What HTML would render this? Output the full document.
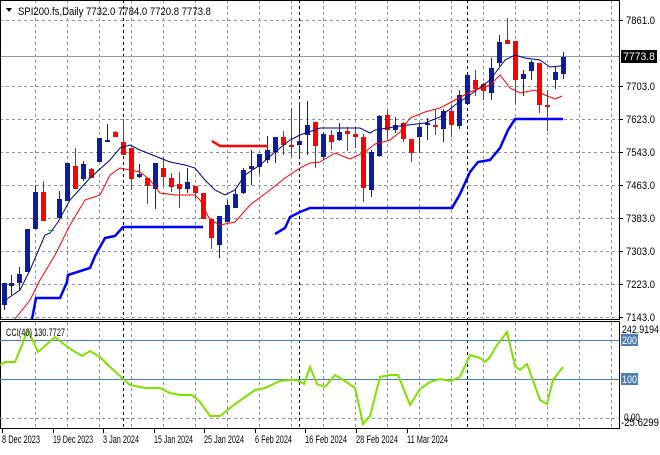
<!DOCTYPE html><html><head><style>
body{margin:0;background:#fff;width:660px;height:450px;overflow:hidden;font-family:"Liberation Sans",sans-serif}
svg text{font-family:"Liberation Sans",sans-serif;font-size:11px}
</style></head><body>
<svg id="s" width="660" height="450" xmlns="http://www.w3.org/2000/svg" shape-rendering="crispEdges"></svg>
<script>
var s=document.getElementById('s'),h='';
function L(x1,y1,x2,y2,c,w,d){h+='<line x1="'+x1+'" y1="'+y1+'" x2="'+x2+'" y2="'+y2+'" stroke="'+c+'" stroke-width="'+(w||1)+'"'+(d?' stroke-dasharray="'+d+'"':'')+'/>';}
function P(pts,c,w){h+='<polyline fill="none" stroke="'+c+'" stroke-width="'+w+'" shape-rendering="auto" points="'+pts.map(function(p){return p.join(',')}).join(' ')+'"/>';}
function T(x,y,t,a,tl){h+='<text x="'+x+'" y="'+y+'"'+(a||'')+(tl?' textLength="'+tl+'" lengthAdjust="spacingAndGlyphs"':'')+'>'+t+'</text>';}
for(var x=35;x<619;x+=32){L(x+.5,0,x+.5,319,'#8a929a',1,'3,3');L(x+.5,322,x+.5,428,'#8a929a',1,'3,3');}
[123,299,467].forEach(function(x){L(x+.5,0,x+.5,319,'#000',1,'3,3');L(x+.5,322,x+.5,428,'#000',1,'3,3');});
var ys=[20,86,119,152,185,218,251,284,317],lb=['7861.0','7703.0','7623.0','7543.0','7463.0','7383.0','7303.0','7223.0','7143.0'];
ys.forEach(function(y,i){L(0,y+.5,619,y+.5,'#8a929a',1,'3,3');L(619,y+.5,623,y+.5,'#000');T(626,y+4,lb[i],'',29);});
L(0,56.5,619,56.5,'#8a9aa8',1);
var C=[[4,'b',283,305,283,310],[11,'b',283,286,275,295],[19,'b',274,283,267,290],[27,'b',229,272,229,272],[35,'b',192,229,185,229],[43,'r',192,221,181,221],[59,'b',199,218,191,218],[67,'b',163,201,163,201],[75,'r',166,189,148,189],[83,'b',164,179,161,181],[91,'r',169,178,168,178],[99,'b',138,162,138,162],[107,'b',140,142,124,142],[115,'r',132,137,131,137],[123,'r',142,155,119,155],[131,'r',148,179,148,190],[139,'b',174,177,164,178],[147,'r',178,186,178,204],[155,'b',163,189,163,209],[163,'r',168,177,158,185],[171,'r',178,187,173,192],[179,'r',184,189,172,208],[187,'b',182,189,168,193],[195,'r',186,193,186,198],[203,'r',193,219,193,219],[211,'r',219,238,219,249],[219,'b',216,245,216,258],[227,'b',205,222,200,222],[235,'b',194,208,189,208],[243,'b',170,193,168,194],[251,'b',166,169,150,185],[259,'b',154,167,155,174],[267,'b',150,160,136,163],[275,'b',137,152,137,163],[283,'r',137,145,131,155],[291,'r',145,146,108,157],[299,'b',141,145,102,157],[307,'b',125,135,101,155],[315,'r',122,146,122,168],[323,'b',134,157,132,160],[331,'r',135,142,130,150],[339,'b',132,140,123,141],[347,'r',131,134,127,151],[355,'r',134,137,127,148],[363,'r',137,188,134,202],[371,'b',152,190,150,197],[379,'b',116,156,115,157],[387,'r',115,130,110,139],[395,'b',125,130,117,133],[403,'r',123,139,122,142],[411,'r',139,153,139,162],[419,'b',127,137,124,153],[427,'b',123,125,118,140],[435,'r',125,126,109,135],[443,'b',111,129,109,142],[451,'r',111,125,105,137],[459,'b',95,126,90,129],[467,'b',75,104,75,104],[475,'r',80,89,70,96],[483,'r',84,91,83,100],[491,'b',68,93,58,100],[499,'b',42,63,35,66],[507,'r',40,44,18,44],[515,'r',41,80,41,104],[523,'b',74,79,70,96],[531,'b',62,71,60,80],[539,'r',63,105,63,113],[547,'r',105,106,90,131],[555,'b',72,80,66,89],[563,'b',57,74,52,79]];
C.forEach(function(c){var col=c[1]=='b'?'#0a1f9e':'#ff0000';L(c[0]+.5,c[4],c[0]+.5,c[5],col,1);h+='<rect x="'+(c[0]-2)+'" y="'+c[2]+'" width="5" height="'+Math.max(2,c[3]-c[2])+'" fill="'+col+'"/>';});
L(48,230.5,54,230.5,'#00e000',1);
P([[4,301],[20,290],[30,270],[45,235],[50,233],[58,222],[70,200],[90,178],[110,160],[120,148],[130,145],[140,150],[155,156],[170,162],[185,165],[195,168],[205,180],[215,190],[225,195],[235,190],[245,175],[260,165],[275,152],[290,140],[300,135],[320,128],[330,128],[360,128],[370,133],[375,130],[400,126],[425,123],[440,117],[455,105],[470,95],[490,80],[505,60],[515,55],[525,58],[540,60],[550,67],[560,66],[565,64]],'#000080',1);
P([[15,319],[30,300],[40,280],[55,255],[70,225],[85,200],[100,195],[110,175],[120,168],[130,170],[140,172],[150,180],[160,193],[175,195],[195,195],[200,200],[210,220],[220,225],[235,222],[250,205],[270,190],[285,178],[300,168],[310,163],[320,162],[335,153],[350,159],[365,152],[375,144],[390,140],[400,132],[410,118],[425,112],[440,108],[455,100],[470,92],[490,85],[500,75],[510,88],[520,93],[535,90],[545,95],[555,99],[562,96]],'#ff0000',1);
P([[32,319],[36,298],[60,298],[67,282],[68,275],[90,268],[95,256],[105,238],[115,236],[123,227],[203,227]],'#0000ff',2.5);
P([[275,234],[285,228],[290,217],[300,212],[310,208],[452,208],[460,194],[470,172],[478,162],[490,160],[500,148],[508,130],[515,119],[563,119]],'#0000ff',2.5);
P([[212,141],[220,146],[268,146]],'#ff0000',2.5);
h+='<rect x="621" y="50" width="36" height="13" fill="#000"/>';T(623,60,'7773.8',' fill="#fff"',32);
h+='<polygon points="6,8 12,8 9,12" fill="#000"/>';T(18,15,'SPI200.fs,Daily  7732.0 7784.0 7720.8 7773.8','',193);
h+='<rect x="0.5" y="0.5" width="619" height="319" fill="none" stroke="#000"/>';
h+='<rect x="0.5" y="321.5" width="619" height="107" fill="none" stroke="#000"/>';
L(0,340.5,619,340.5,'#4a7fb0',1);L(0,379.5,619,379.5,'#4a7fb0',1);L(0,418.5,619,418.5,'#8a929a',1,'3,3');
P([[0,365],[5,362],[15,362],[28,330],[38,352],[55,337],[65,345],[72,350],[82,356],[90,351],[100,357],[110,367],[130,385],[145,388],[160,388],[170,393],[180,395],[192,395],[200,402],[210,416],[220,416],[235,404],[245,397],[255,390],[265,388],[280,381],[290,380],[297,380],[304,384],[310,367],[317,384],[325,387],[335,375],[345,381],[355,388],[363,424],[370,416],[380,377],[390,375],[398,375],[410,405],[420,389],[430,382],[440,379],[450,381],[460,377],[470,355],[480,358],[485,362],[490,357],[497,345],[507,332],[515,366],[520,370],[527,364],[540,400],[547,404],[553,380],[563,367]],'#7fe000',2);
T(6,336,'CCI(40) 130.7727','',59);
T(622,333,'242.9194','',37);
h+='<rect x="621" y="334" width="17" height="12" fill="#4a7fb0"/>';T(622,344,'200',' fill="#fff"',15);
h+='<rect x="621" y="373" width="17" height="12" fill="#4a7fb0"/>';T(622,383,'100',' fill="#fff"',15);
T(624,421,'0.00','',16);T(621,426,'-25.6299','',38);
[[2,'8 Dec 2023',38],[53,'19 Dec 2023',40],[103,'3 Jan 2024',36],[154,'15 Jan 2024',39],[204,'25 Jan 2024',40],[255,'6 Feb 2024',37],[305,'16 Feb 2024',42],[356,'28 Feb 2024',42],[407,'11 Mar 2024',41]].forEach(function(d){T(d[0],443,d[1],'',d[2]);L(d[0]+.5,429,d[0]+.5,433,'#000');});
s.innerHTML=h;
</script></body></html>
